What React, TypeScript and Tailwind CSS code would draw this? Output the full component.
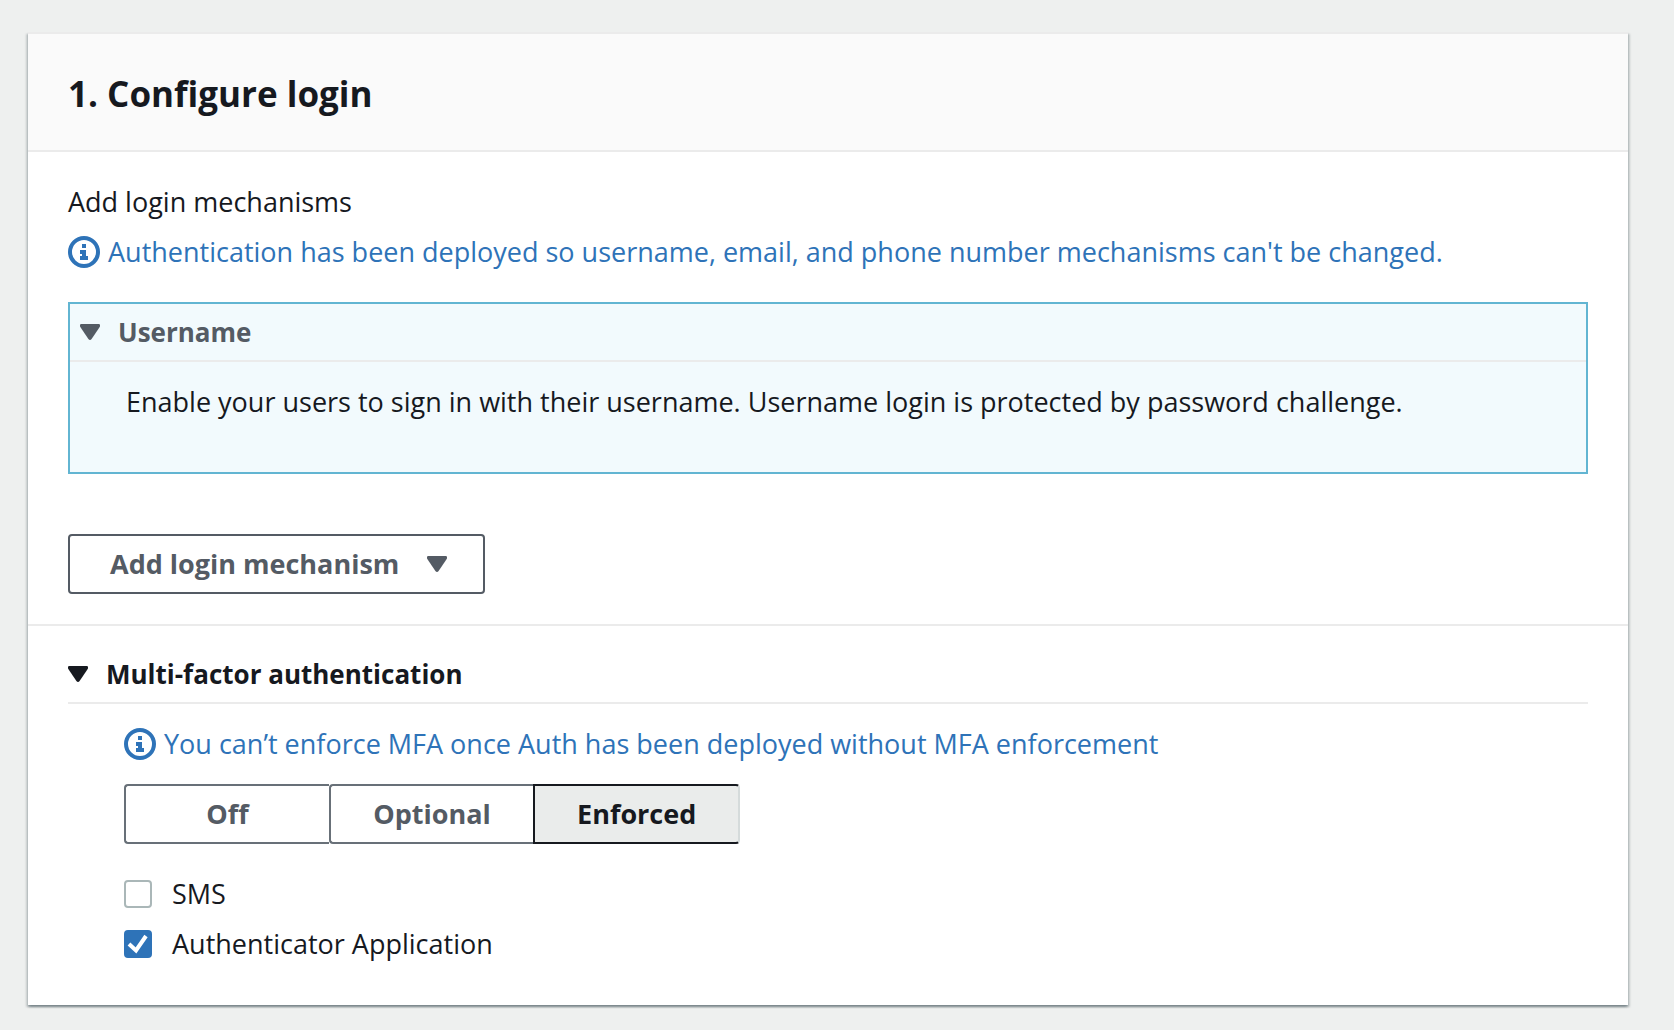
import { useState } from "react";

function Caret({ className = "" }: { className?: string }) {
  return (
    <svg
      viewBox="0 0 20 16"
      className={`h-4 w-5 shrink-0 fill-current ${className}`}
      aria-hidden="true"
    >
      <path d="M1.2 0h17.6q1.2 0 1.2 1.2v.8q0 .5-.3 1L11.6 15q-1.600 2-3.200 0L.3 3Q0 2.500 0 2v-.8Q0 0 1.200 0z" />
    </svg>
  );
}

function InfoNote({ children }: { children: string }) {
  return (
    <p className="flex items-center gap-2 text-[27px] leading-10 text-[#2e73b8]">
      <svg viewBox="0 0 32 32" className="size-8 shrink-0" aria-hidden="true">
        <circle cx="16" cy="16" r="14" fill="none" stroke="currentColor" strokeWidth="4" />
        <path
          fill="currentColor"
          d="M14 8h4v4h-4zM12 14h6v6h2v4h-8v-4h2v-2h-2z"
        />
      </svg>
      <span>{children}</span>
    </p>
  );
}

function Checkbox({
  label,
  checked,
  onChange,
}: {
  label: string;
  checked: boolean;
  onChange: (value: boolean) => void;
}) {
  return (
    <label className="flex w-fit items-center gap-5 text-[27px] leading-[50px]">
      <span className="grid size-7 shrink-0">
        <input
          type="checkbox"
          checked={checked}
          onChange={(e) => onChange(e.target.checked)}
          className="peer col-start-1 row-start-1 size-7 appearance-none rounded border-2 border-[#aab7b8] bg-white checked:border-[#2e73b8] checked:bg-[#2e73b8]"
        />
        <svg
          viewBox="0 0 28 28"
          className="pointer-events-none invisible col-start-1 row-start-1 size-7 peer-checked:visible"
          aria-hidden="true"
        >
          <path d="M5 14l7 6.500L22 6" fill="none" stroke="#fff" strokeWidth="4" />
        </svg>
      </span>
      {label}
    </label>
  );
}

export default function App() {
  const [usernameOpen, setUsernameOpen] = useState(true);
  const [mfaOpen, setMfaOpen] = useState(true);
  const [mode, setMode] = useState("Enforced");
  const [sms, setSms] = useState(false);
  const [totp, setTotp] = useState(true);

  return (
    <main className="min-h-screen bg-[#eef0ef] pt-8 pr-[46px] pb-6 pl-7 font-['Open_Sans',sans-serif] text-[#16191f]">
      <div className="border-t-2 border-[#ebebeb] bg-white shadow-[0_2px_2px_0_rgba(0,28,36,0.3),2px_2px_2px_0_rgba(0,28,36,0.15),-2px_2px_2px_0_rgba(0,28,36,0.15)]">
        <header className="border-b-2 border-[#ebebeb] bg-[#fafafa] px-10 pt-[34px] pb-[30px]">
          <h1 className="text-[35px] leading-[52px] font-bold">1. Configure login</h1>
        </header>

        <section className="border-b-2 border-[#ebebeb] px-10 py-[30px]">
          <h2 className="mb-2.5 text-[27px] leading-10">Add login mechanisms</h2>
          <InfoNote>
            Authentication has been deployed so username, email, and phone number mechanisms can't be changed.
          </InfoNote>

          <div className="mt-[30px] border-2 border-[#62b5d2] bg-[#f2fafd]">
            <h3>
              <button
                type="button"
                aria-expanded={usernameOpen}
                onClick={() => setUsernameOpen(!usernameOpen)}
                className="flex w-full items-center gap-[18px] border-b-2 border-[#ebebeb] px-2.5 py-2 text-left text-[26px] leading-10 font-bold text-[#545b64]"
              >
                <Caret />
                Username
              </button>
            </h3>
            {usernameOpen && (
              <p className="px-14 pt-5 pb-[50px] text-[27px] leading-10">
                Enable your users to sign in with their username. Username login is protected by password challenge.
              </p>
            )}
          </div>

          <button
            type="button"
            aria-haspopup="menu"
            className="mt-[60px] flex h-15 items-center gap-7 rounded border-2 border-[#545b64] bg-white pr-9 pl-10 text-[27px] leading-10 font-bold whitespace-nowrap text-[#545b64]"
          >
            Add login mechanism
            <Caret />
          </button>
        </section>

        <section className="px-10 pt-7 pb-9">
          <h2>
            <button
              type="button"
              aria-expanded={mfaOpen}
              onClick={() => setMfaOpen(!mfaOpen)}
              className="flex w-full items-center gap-[18px] border-b-2 border-[#ebebeb] pb-2 text-left text-[26px] leading-10 font-bold"
            >
              <Caret />
              Multi-factor authentication
            </button>
          </h2>

          {mfaOpen && (
            <div className="pt-5 pl-14">
              <InfoNote>You can’t enforce MFA once Auth has been deployed without MFA enforcement</InfoNote>

              <div role="group" aria-label="MFA enforcement" className="mt-5 mb-[25px] flex w-[616px]">
                {["Off", "Optional", "Enforced"].map((option) => (
                  <button
                    key={option}
                    type="button"
                    aria-pressed={mode === option}
                    onClick={() => setMode(option)}
                    className="h-15 flex-1 rounded-l border-2 border-r-0 border-[#687078] bg-white text-[27px] leading-10 font-bold text-[#545b64] last:rounded-r last:border-r-2 last:border-r-[#d5dbdb] aria-pressed:rounded-l-none aria-pressed:border-y-[#16191f] aria-pressed:border-l-[#16191f] aria-pressed:bg-[#eaeceb] aria-pressed:text-[#16191f]"
                  >
                    {option}
                  </button>
                ))}
              </div>

              <Checkbox label="SMS" checked={sms} onChange={setSms} />
              <Checkbox label="Authenticator Application" checked={totp} onChange={setTotp} />
            </div>
          )}
        </section>
      </div>
    </main>
  );
}
